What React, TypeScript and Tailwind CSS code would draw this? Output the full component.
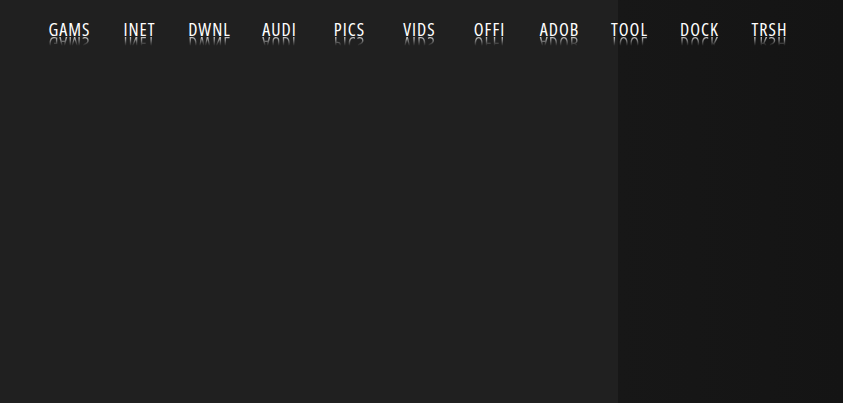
const items = ["GAMS", "INET", "DWNL", "AUDI", "PICS", "VIDS", "OFFI", "ADOB", "TOOL", "DOCK", "TRSH"];

function NavItem({ label }: { label: string }) {
  return (
    <div className="flex w-[70px] flex-col items-center">
      <span className="pl-[1px] text-[18px] leading-[18px] tracking-[1px] font-stretch-semi-condensed text-white">
        {label}
      </span>
      <span className="-mt-[3px] scale-y-[-1] bg-gradient-to-t from-white/70 from-15% via-white/20 via-45% to-transparent to-60% bg-clip-text pl-[1px] text-[18px] leading-[18px] tracking-[1px] font-stretch-semi-condensed text-transparent">
        {label}
      </span>
    </div>
  );
}

export default function App() {
  return (
    <div className="flex h-[403px] w-[843px] overflow-hidden bg-[#202020] font-['Open_Sans',sans-serif]">
      <div className="relative h-full w-[618px] bg-[#202020]">
        <nav className="absolute left-[34px] top-[20px] flex">
          {items.map((l) => (
            <NavItem key={l} label={l} />
          ))}
        </nav>
      </div>
      <div className="h-full flex-1 bg-gradient-to-r from-[#171717] to-[#141414]" />
    </div>
  );
}
